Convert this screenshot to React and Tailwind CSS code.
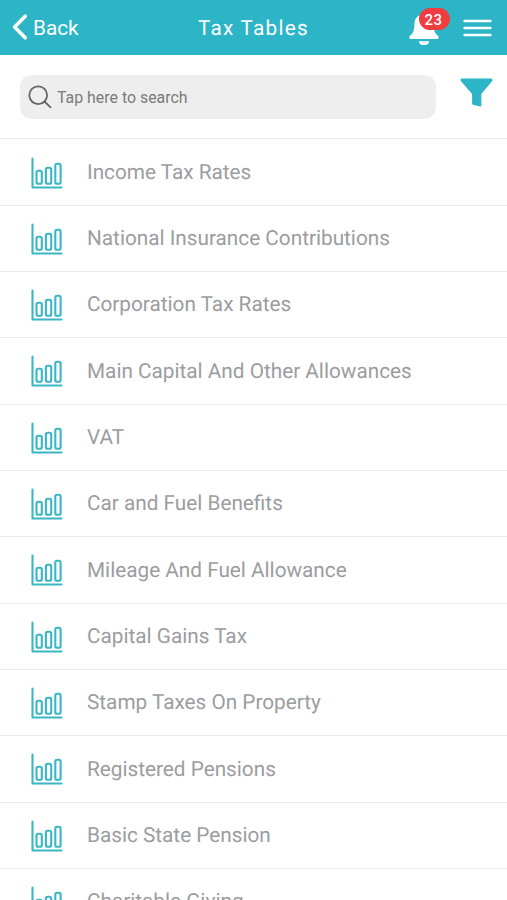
const TABLES = [
  "Income Tax Rates",
  "National Insurance Contributions",
  "Corporation Tax Rates",
  "Main Capital And Other Allowances",
  "VAT",
  "Car and Fuel Benefits",
  "Mileage And Fuel Allowance",
  "Capital Gains Tax",
  "Stamp Taxes On Property",
  "Registered Pensions",
  "Basic State Pension",
  "Charitable Giving",
];

function BackIcon({ className }) {
  return (
    <svg viewBox="0 0 16 26" fill="none" stroke="currentColor" strokeWidth="3.6" strokeLinecap="round" strokeLinejoin="round" className={className}>
      <path d="M13.2 2.2 2.6 13l10.6 10.8" />
    </svg>
  );
}

function BellIcon({ className }) {
  return (
    <svg viewBox="0 0 30 34" fill="currentColor" className={className}>
      <path d="M15 .5c1.3 0 2 .9 2 2 4.6.9 7.6 4.5 7.6 9.5 0 7 1.6 9.3 3.9 11.3 2 1.8 1.2 3.7-.9 3.7H2.4c-2.100 0-2.900-1.900-.9-3.700 2.300-2 3.900-4.300 3.900-11.300 0-5 3-8.600 7.600-9.500 0-1.100.7-2 2-2z" />
      <path d="M9.800 29.200h10.400c-.3 2.500-2.400 3.900-5.200 3.900s-4.900-1.400-5.200-3.900z" />
    </svg>
  );
}

function MenuIcon({ className }) {
  return (
    <svg viewBox="0 0 29 18" fill="none" stroke="currentColor" strokeWidth="2.6" strokeLinecap="round" className={className}>
      <path d="M1.600 2h25.800M1.600 9h25.800M1.600 16h25.800" />
    </svg>
  );
}

function SearchIcon({ className }) {
  return (
    <svg viewBox="0 0 24 24" fill="none" stroke="currentColor" strokeWidth="1.8" strokeLinecap="round" className={className}>
      <circle cx="10.2" cy="10.2" r="8.9" />
      <path d="m16.500 16.500 6 5.800" />
    </svg>
  );
}

function FilterIcon({ className }) {
  return (
    <svg viewBox="0 0 33 29" fill="currentColor" className={className}>
      <path d="M2 .5h29c1.500 0 2 1.500 1.200 2.600L21.300 16v11.500c0 .8-.5 1.100-1.200 1L13 26.700c-.6-.2-.9-.5-.9-1.100V16L.8 3.100C0 2 .5.5 2 .5z" />
    </svg>
  );
}

function ChartIcon({ className }) {
  return (
    <svg viewBox="0 0 32 32" fill="none" stroke="currentColor" strokeWidth="2.1" strokeLinecap="round" strokeLinejoin="round" className={className}>
      <path d="M1.500 1.500v29h29" />
      <rect x="5.5" y="13.8" width="5.3" height="12.9" rx="1.8" />
      <rect x="14.9" y="10.8" width="5.3" height="15.9" rx="1.8" />
      <rect x="24.3" y="6.8" width="5.3" height="19.9" rx="1.8" />
    </svg>
  );
}

export default function App() {
  return (
    <div className="flex h-screen w-full flex-col overflow-hidden bg-white font-['Roboto',sans-serif] [text-rendering:geometricPrecision]">
      {/* Top bar */}
      <header className="grid h-[54.5px] shrink-0 grid-cols-[1fr_auto_1fr] items-center bg-[#2bb5c6] pl-3 pr-[15px] text-white">
        <button type="button" className="flex items-center gap-[5px]">
          <BackIcon className="h-[26px] w-4" />
          <span className="pt-px text-[20.75px] leading-6">Back</span>
        </button>
        <h1 className="pl-[3px] pt-[3px] text-[20.75px] leading-6 tracking-[1.25px]">Tax Tables</h1>
        <div className="flex items-center justify-end gap-[24px]">
          <button type="button" aria-label="Notifications" className="relative mt-[3px]">
            <BellIcon className="h-[34px] w-[30px]" />
            <span className="absolute -top-[3.5px] left-[10px] flex h-[22px] w-[31px] items-center justify-center rounded-full bg-[#f13c40] pr-[2px] pt-[2px] text-[15px] font-medium leading-none tracking-[0.5px]">
              23
            </span>
          </button>
          <button type="button" aria-label="Menu" className="mt-[2px]">
            <MenuIcon className="h-[18px] w-[29px]" />
          </button>
        </div>
      </header>

      {/* Search */}
      <div className="flex h-[83px] shrink-0 items-start gap-6 pl-5 pr-[14px] pt-[20.5px]">
        <div className="flex h-[44px] flex-1 items-center gap-[5px] rounded-[12px] bg-[#eeeeee] pl-[8px]">
          <SearchIcon className="size-6 text-[#666]" />
          <input
            type="text"
            placeholder="Tap here to search"
            className="flex-1 bg-transparent pt-px text-[15.9px] outline-none placeholder:text-[#7b7b7b]"
          />
        </div>
        <button type="button" aria-label="Filter" className="mt-[3px] text-[#2bb5c6]">
          <FilterIcon className="h-[29px] w-[33px]" />
        </button>
      </div>

      {/* Tax tables */}
      <ul className="border-t border-[#e9e9e9]">
        {TABLES.map((name) => (
          <li key={name} className="flex h-[66.35px] items-center gap-6 border-b border-[#e9e9e9] pl-[31px] first:h-[67px] first:pt-px">
            <ChartIcon className="mt-px size-8 shrink-0 text-[#3bb6c5]" />
            <span className="pt-[1.5px] text-[20.75px] leading-6 text-[#9b9da0]">{name}</span>
          </li>
        ))}
      </ul>
    </div>
  );
}
